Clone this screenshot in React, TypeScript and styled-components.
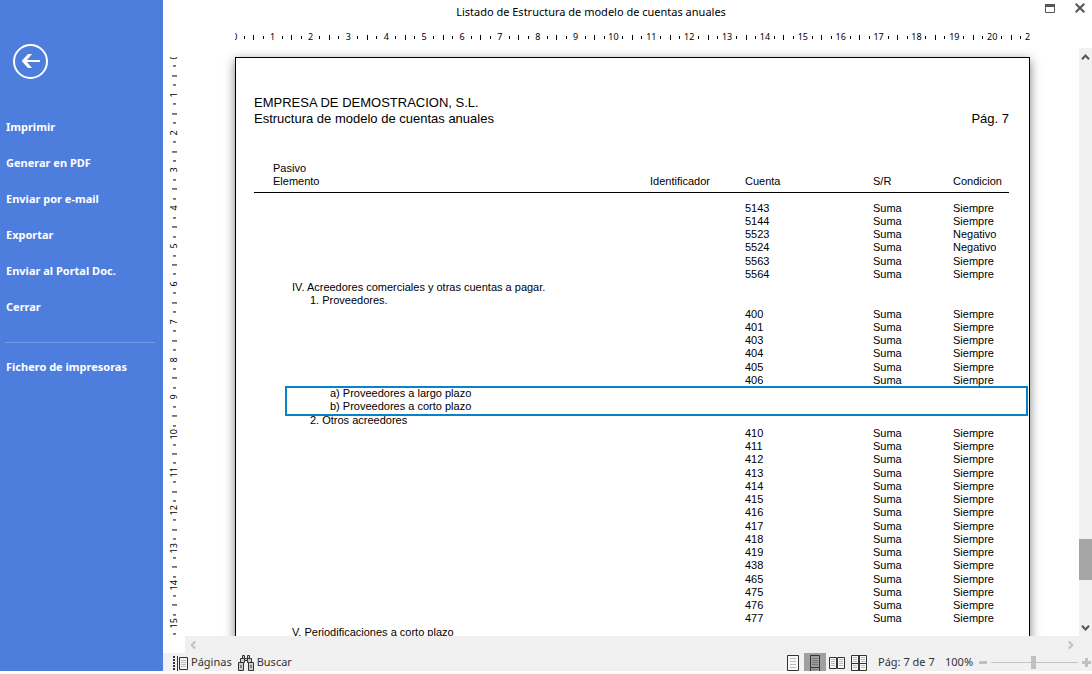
import React from 'react';
import styled, { createGlobalStyle, css } from 'styled-components';

const UI_FONT = "'Noto Sans', 'Open Sans', sans-serif";
const DOC_FONT = "'Liberation Sans', Arial, sans-serif";

const GlobalStyle = createGlobalStyle`
  * { box-sizing: border-box; }
  html, body, #root { height: 100%; }
  body { margin: 0; background: #fff; font-family: ${UI_FONT}; overflow: hidden; }
  button { font: inherit; color: inherit; background: none; border: 0; padding: 0; cursor: pointer; }
  svg { display: block; }
`;

const Shell = styled.div`
  display: grid;
  grid-template-columns: 163px minmax(0, 1fr);
  height: 100%;
  padding-bottom: 3px;
`;

/* Side menu */
const Sidebar = styled.nav`
  background: #4d7ddd;
  color: #fff;
  padding-top: 44px;
`;
const BackButton = styled.button`
  display: block;
  margin: 0 0 30px 13px;
`;
const Menu = styled.ul`
  list-style: none;
  margin: 0;
  padding: 0;
`;
const MenuItem = styled.button`
  display: block;
  width: 100%;
  height: 36px;
  padding-left: 6px;
  text-align: left;
  font-size: 11px;
  font-weight: 700;
  line-height: 36px;
  white-space: nowrap;
`;
const Separator = styled.hr`
  margin: 17px 8px 6px 5px;
  border: 0;
  height: 1px;
  background: #7399e5;
`;

/* Main column */
const Main = styled.main`
  display: flex;
  flex-direction: column;
  min-width: 0;
  min-height: 0;
`;
const TitleBar = styled.header`
  display: flex;
  height: 24px;
  flex: none;
`;
const Title = styled.h1`
  flex: 1;
  margin: 0;
  text-align: center;
  font-size: 11px;
  font-weight: 400;
  line-height: 24px;
  color: #000;
`;
const WindowButtons = styled.div`
  display: flex;
  justify-content: flex-end;
  align-items: flex-start;
  gap: 20px;
  width: 73px;
  padding: 3px 7px 0 0;
`;

const RulerRow = styled.div`
  flex: none;
  height: 24px;
  padding: 7px 62px 0 72px;
`;
const HorizontalRuler = styled.div`
  height: 12px;
  overflow: hidden;
`;
const HorizontalScale = styled.div`
  display: flex;
  align-items: center;
  height: 12px;
  margin: 0 -5px;
`;
const VerticalRuler = styled.div`
  flex: none;
  width: 22px;
  margin-top: 9px;
  overflow: hidden;
`;
const VerticalScale = styled.div`
  display: flex;
  flex-direction: column;
  align-items: center;
  height: 605px;
  margin-top: -5px;
`;
const RulerCell = styled.div<{ $vertical?: boolean }>`
  flex: 1 1 0;
  min-width: 0;
  min-height: 0;
  display: flex;
  align-items: center;
  justify-content: center;
  font-size: 9px;
  line-height: 12px;
  color: #000;
  ${p => p.$vertical && css`
    writing-mode: vertical-rl;
    transform: rotate(180deg);
  `}
`;
const Tick = styled.i<{ $vertical?: boolean; $long?: boolean }>`
  flex: none;
  background: #000;
  width: ${p => (p.$vertical ? (p.$long ? 5 : 3) : 1)}px;
  height: ${p => (p.$vertical ? 1 : p.$long ? 5 : 3)}px;
`;

const Workspace = styled.div`
  display: flex;
  flex: 1;
  min-height: 0;
`;
const Viewport = styled.div`
  flex: 1;
  min-width: 0;
  overflow: hidden;
  padding: 9px 49px 0 50px;
`;
const Paper = styled.article`
  min-height: 1123px;
  border: 1px solid #000;
  box-shadow: 0 3px 10px rgba(0, 0, 0, 0.5);
  padding: 37px 20px 0 18px;
  background: #fff;
  font-family: ${DOC_FONT};
  color: #000;
`;
const ReportHeader = styled.header`
  display: flex;
  justify-content: space-between;
  align-items: flex-end;
  margin-bottom: 35px;
  font-size: 13px;
  line-height: 16px;
`;
const Report = styled.table`
  width: 100%;
  table-layout: fixed;
  border-collapse: collapse;
  font-size: 11px;
  line-height: 13px;
  white-space: nowrap;
`;
const Head = styled.thead`
  border-bottom: 1px solid #000;
  &::after { content: ''; display: table-row; height: 4px; }
`;
const Spacer = styled.tbody`
  height: 10px;
`;
const HeadCell = styled.th<{ $indent?: number }>`
  padding: 0 0 0 ${p => p.$indent ?? 0}px;
  text-align: left;
  font-weight: 400;
`;
const Group = styled.tbody<{ $selected?: boolean }>`
  ${p => p.$selected && css`
    position: relative;
    &::after {
      content: '';
      position: absolute;
      inset: -1px -19px -2px 31px;
      border: 2px solid #0a82c8;
    }
  `}
`;
const Row = styled.tr<{ $tall: boolean }>`
  height: ${p => (p.$tall ? 14 : 13)}px;
`;
const Cell = styled.td<{ $indent?: number }>`
  padding: 0 0 0 ${p => p.$indent ?? 0}px;
  vertical-align: top;
`;

const VerticalScroll = styled.div`
  flex: none;
  width: 13px;
  display: flex;
  flex-direction: column;
  align-items: center;
  justify-content: space-between;
  padding: 6px 0 5px;
  background: #f0f0f0;
`;
const ScrollSpace = styled.div<{ $grow: number }>`
  flex: ${p => p.$grow} 1 0;
`;
const VerticalThumb = styled.div`
  width: 13px;
  height: 41px;
  background: #a6a6a6;
`;
const HorizontalScroll = styled.div`
  flex: none;
  display: flex;
  align-items: center;
  justify-content: space-between;
  height: 17px;
  margin-left: 22px;
  padding: 0 18px 0 5px;
  background: #f0f0f0;
`;

/* Status bar */
const StatusBar = styled.footer`
  flex: none;
  display: flex;
  align-items: center;
  justify-content: space-between;
  height: 18px;
  padding-left: 10px;
  background: #f1f1f1;
  color: #333;
  font-size: 11px;
  line-height: 20px;
  white-space: nowrap;
`;
const StatusGroup = styled.div`
  display: flex;
  align-items: center;
  height: 18px;
`;
const ToolButton = styled.button`
  display: flex;
  align-items: center;
  gap: 3px;
  height: 18px;
  margin-right: 6px;
`;
const ViewButton = styled.button<{ $active?: boolean }>`
  display: flex;
  justify-content: center;
  width: 22px;
  height: 18px;
  overflow: hidden;
  background: ${p => (p.$active ? '#a0a0a0' : 'transparent')};
`;
const PageInfo = styled.span`
  width: 67px;
  margin-left: 8px;
`;
const ZoomValue = styled.span`
  width: 34px;
`;
const ZoomSlider = styled.input`
  appearance: none;
  width: 87px;
  height: 13px;
  margin: 0 4px;
  background: linear-gradient(#c3c3c3, #c3c3c3) center / 100% 1px no-repeat;
  &::-webkit-slider-thumb {
    appearance: none;
    width: 5px;
    height: 13px;
    background: #c0c0c0;
  }
`;

type Entry = { label?: string; indent?: number; account?: string; condition?: string };

const accounts = (codes: string[], negative: string[] = []): Entry[] =>
  codes.map(account => ({ account, condition: negative.includes(account) ? 'Negativo' : 'Siempre' }));

const groups: { selected?: boolean; entries: Entry[] }[] = [
  {
    entries: [
      ...accounts(['5143', '5144', '5523', '5524', '5563', '5564'], ['5523', '5524']),
      { label: 'IV. Acreedores comerciales y otras cuentas a pagar.', indent: 38 },
      { label: '1. Proveedores.', indent: 56 },
      ...accounts(['400', '401', '403', '404', '405', '406']),
    ],
  },
  {
    selected: true,
    entries: [
      { label: 'a) Proveedores a largo plazo', indent: 76 },
      { label: 'b) Proveedores a corto plazo', indent: 76 },
    ],
  },
  {
    entries: [
      { label: '2. Otros acreedores', indent: 56 },
      ...accounts(['410', '411', '412', '413', '414', '415', '416', '417', '418', '419', '438', '465', '475', '476', '477']),
      { label: 'V. Periodificaciones a corto plazo', indent: 38 },
    ],
  },
];

const menu = ['Imprimir', 'Generar en PDF', 'Enviar por e-mail', 'Exportar', 'Enviar al Portal Doc.', 'Cerrar'];

function Scale({ cells, vertical }: { cells: number; vertical?: boolean }) {
  return (
    <>
      {Array.from({ length: cells }, (_, i) => (
        <RulerCell key={i} $vertical={vertical}>
          {i % 4 === 0 ? i / 4 : <Tick $vertical={vertical} $long={i % 4 === 2} />}
        </RulerCell>
      ))}
    </>
  );
}

const Chevron = ({ d, color, w, h }: { d: string; color: string; w: number; h: number }) => (
  <svg width={w} height={h} viewBox={`0 0 ${w} ${h}`} fill="none" stroke={color} strokeWidth="2">
    <path d={d} />
  </svg>
);

function ReportTable() {
  let line = 0;
  return (
    <Report>
      <colgroup>
        <col />
        <col width={95} />
        <col width={128} />
        <col width={80} />
        <col width={56} />
      </colgroup>
      <Head>
        <tr>
          <HeadCell $indent={19}>Pasivo<br />Elemento</HeadCell>
          <HeadCell><br />Identificador</HeadCell>
          <HeadCell><br />Cuenta</HeadCell>
          <HeadCell><br />S/R</HeadCell>
          <HeadCell><br />Condicion</HeadCell>
        </tr>
      </Head>
      <Spacer><tr><td colSpan={5} /></tr></Spacer>
      {groups.map((group, g) => (
        <Group key={g} $selected={group.selected}>
          {group.entries.map(entry => {
            line += 1;
            return (
              <Row key={line} $tall={line % 4 === 0}>
                <Cell $indent={entry.indent}>{entry.label}</Cell>
                <Cell />
                <Cell>{entry.account}</Cell>
                <Cell>{entry.account && 'Suma'}</Cell>
                <Cell>{entry.condition}</Cell>
              </Row>
            );
          })}
        </Group>
      ))}
    </Report>
  );
}

export default function App() {
  return (
    <>
      <GlobalStyle />
      <Shell>
        <Sidebar>
          <BackButton aria-label="Volver">
            <svg width="35" height="35" viewBox="0 0 35 35" fill="none" stroke="#fff">
              <circle cx="17.5" cy="17.5" r="16.5" strokeWidth="2" />
              <path d="M15 10h4l-5 6h13v2H14l5 6h-4l-6-6.500v-1z" fill="#fff" stroke="none" />
            </svg>
          </BackButton>
          <Menu>
            {menu.map(item => (
              <li key={item}><MenuItem>{item}</MenuItem></li>
            ))}
          </Menu>
          <Separator />
          <MenuItem>Fichero de impresoras</MenuItem>
        </Sidebar>

        <Main>
          <TitleBar>
            <Title>Listado de Estructura de modelo de cuentas anuales</Title>
            <WindowButtons>
              <button aria-label="Maximizar">
                <svg width="10" height="11" viewBox="0 0 10 11" fill="none" stroke="#555">
                  <path d="M.5 1.5h9v8h-9z" />
                  <path d="M0 2.5h10" strokeWidth="3" />
                </svg>
              </button>
              <button aria-label="Cerrar ventana">
                <svg width="10" height="10" viewBox="0 0 10 10" fill="none" stroke="#555" strokeWidth="2">
                  <path d="M.7.7l8.6 8.6M9.3.7L.7 9.3" />
                </svg>
              </button>
            </WindowButtons>
          </TitleBar>
          <RulerRow>
            <HorizontalRuler>
              <HorizontalScale><Scale cells={85} /></HorizontalScale>
            </HorizontalRuler>
          </RulerRow>
          <Workspace>
            <VerticalRuler>
              <VerticalScale><Scale cells={64} vertical /></VerticalScale>
            </VerticalRuler>
            <Viewport>
              <Paper>
                <ReportHeader>
                  <div>EMPRESA DE DEMOSTRACION, S.L.<br />Estructura de modelo de cuentas anuales</div>
                  <div>Pág. 7</div>
                </ReportHeader>
                <ReportTable />
              </Paper>
            </Viewport>
            <VerticalScroll>
              <button aria-label="Subir"><Chevron w={9} h={6} color="#555" d="M1 5.2l3.5-3.7L8 5.2" /></button>
              <ScrollSpace $grow={479} />
              <VerticalThumb />
              <ScrollSpace $grow={45} />
              <button aria-label="Bajar"><Chevron w={9} h={6} color="#555" d="M1 .8l3.5 3.7L8 .8" /></button>
            </VerticalScroll>
          </Workspace>
          <HorizontalScroll>
            <button aria-label="Izquierda"><Chevron w={6} h={8} color="#c0c0c0" d="M5.2.5L1.7 4l3.5 3.5" /></button>
            <button aria-label="Derecha"><Chevron w={6} h={8} color="#c0c0c0" d="M.8.5L4.3 4 .8 7.5" /></button>
          </HorizontalScroll>
          <StatusBar>
            <StatusGroup>
              <ToolButton>
                <svg width="15" height="18" viewBox="0 0 15 18" fill="none" stroke="#333">
                  <path d="M1 3v15" strokeWidth="2" strokeDasharray="2 1" />
                  <path d="M4.500 3v15" />
                  <path d="M6.500 4.500h8v12h-8z" fill="#f4f4f4" />
                  <path d="M8 7.500h5M8 9.500h5M8 11.500h5M8 13.500h5" stroke="#bbb" />
                </svg>
                Páginas
              </ToolButton>
              <ToolButton>
                <svg width="16" height="18" viewBox="0 0 16 18" fill="#ccc" stroke="#333">
                  <path d="M4.500 2.500h2v3h-2zM9.500 2.500h2v3h-2zM6.500 5.500h3v2h-3z" />
                  <path d="M2.500 5.500h4v4h-4zM9.500 5.500h4v4h-4z" />
                  <path d="M.5 9.500h5v8h-5zM10.500 9.500h5v8h-5z" />
                  <path d="M3 12v3M13 12v3" />
                </svg>
                Buscar
              </ToolButton>
            </StatusGroup>
            <StatusGroup>
              <ViewButton aria-label="Una página">
                <svg width="12" height="18" viewBox="0 0 12 18" fill="#f8f8f8" stroke="#333">
                  <path d="M.5 2.500h11v15H.5z" />
                  <path d="M3 5.500h6M3 8.500h6M3 11.500h6M3 14.500h6" stroke="#bbb" />
                </svg>
              </ViewButton>
              <ViewButton $active aria-label="Páginas continuas">
                <svg width="10" height="18" viewBox="0 0 10 18" fill="none" stroke="#333">
                  <path d="M.5 2.500h9v12h-9zM.5 14.500h9v5h-9z" />
                  <path d="M2 5.500h6M2 7.500h6M2 9.500h6M2 11.500h6M2 16.500h6" stroke="#777" />
                </svg>
              </ViewButton>
              <ViewButton aria-label="Dos páginas">
                <svg width="16" height="18" viewBox="0 0 16 18" fill="#f8f8f8" stroke="#333">
                  <path d="M.5 4.500h7v11h-7zM8.500 4.500h7v11h-7z" />
                  <path d="M2 6.500h4M2 8.500h4M2 10.500h4M2 12.500h4M10 6.500h4M10 8.500h4M10 10.500h4M10 12.500h4" stroke="#bbb" />
                </svg>
              </ViewButton>
              <ViewButton aria-label="Cuatro páginas">
                <svg width="16" height="18" viewBox="0 0 16 18" fill="#f8f8f8" stroke="#333">
                  <path d="M.5 2.500h15v15H.5zM7.500 2v16M8.500 2v16M0 10.500h16" />
                  <path d="M2 4.500h4M2 6.500h4M2 8.500h4M10 4.500h4M10 6.500h4M10 8.500h4M2 12.500h4M2 14.500h4M10 12.500h4M10 14.500h4" stroke="#bbb" />
                </svg>
              </ViewButton>
              <PageInfo>Pág: 7 de 7</PageInfo>
              <ZoomValue>100%</ZoomValue>
              <button aria-label="Reducir">
                <svg width="8" height="3" viewBox="0 0 8 3"><path d="M0 0h8v3H0z" fill="#c0c0c0" /></svg>
              </button>
              <ZoomSlider type="range" aria-label="Zoom" defaultValue={49} />
              <button aria-label="Ampliar">
                <svg width="10" height="9" viewBox="0 0 10 9"><path d="M0 3h3V0h3v3h3v3H6v3H3V6H0z" fill="#c0c0c0" /></svg>
              </button>
            </StatusGroup>
          </StatusBar>
        </Main>
      </Shell>
    </>
  );
}
